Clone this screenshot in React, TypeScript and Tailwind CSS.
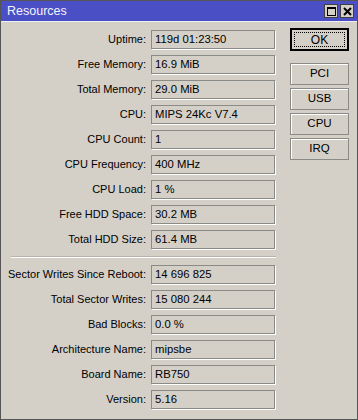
import React from 'react';

const top = [
  ['Uptime', '119d 01:23:50'],
  ['Free Memory', '16.9 MiB'],
  ['Total Memory', '29.0 MiB'],
  ['CPU', 'MIPS 24Kc V7.4'],
  ['CPU Count', '1'],
  ['CPU Frequency', '400 MHz'],
  ['CPU Load', '1 %'],
  ['Free HDD Space', '30.2 MB'],
  ['Total HDD Size', '61.4 MB'],
];

const bottom = [
  ['Sector Writes Since Reboot', '14 696 825'],
  ['Total Sector Writes', '15 080 244'],
  ['Bad Blocks', '0.0 %'],
  ['Architecture Name', 'mipsbe'],
  ['Board Name', 'RB750'],
  ['Version', '5.16'],
];

function Row({ label, value }: { label: string; value: string }) {
  return (
    <div className="flex items-center h-[25px]">
      <span className="w-[150px] text-right pr-[5px] text-[11px] text-black whitespace-nowrap">{label}:</span>
      <div className="w-[124px] h-[19px] border border-[#8a8a86] shadow-[1px_1px_0_#ffffff] flex items-center pl-[3px] text-[11.3px] text-black whitespace-nowrap">
        {value}
      </div>
    </div>
  );
}

function Btn({ label, focus }: { label: string; focus?: boolean }) {
  if (focus) {
    return (
      <div className="w-[59px] h-[23px] border-2 border-black p-[2px]">
        <div className="w-full h-full border border-dotted border-black flex items-center justify-center text-[12px]">{label}</div>
      </div>
    );
  }
  return (
    <div className="w-[59px] h-[22px] border border-[#8a8a86] shadow-[inset_1px_1px_0_#ffffff] flex items-center justify-center text-[11.5px]">
      {label}
    </div>
  );
}

export default function App() {
  return (
    <div className="w-[358px] h-[420px] bg-[#d4d0c8] border border-[#555555] flex flex-col" style={{ fontFamily: '"Liberation Sans", Arial, sans-serif' }}>
      {/* Title bar */}
      <div className="h-[21px] bg-[#4a4fc6] flex items-center justify-between pl-[6px] pr-[3px] border-b border-[#f0f0f0]">
        <span className="text-[#f4f4ff] text-[12.5px]">Resources</span>
        <div className="flex gap-[2px]">
          <div className="w-[14px] h-[14px] bg-[#d4d0c8] border border-[#404040] flex items-center justify-center">
            <div className="w-[9px] h-[9px] border border-black border-t-2" />
          </div>
          <div className="w-[14px] h-[14px] bg-[#d4d0c8] border border-[#404040] flex items-center justify-center">
            <svg width="9" height="9" viewBox="0 0 9 9">
              <path d="M1 1 L8 8 M8 1 L1 8" stroke="black" strokeWidth="2" />
            </svg>
          </div>
        </div>
      </div>

      <div className="flex pt-[5px]">
        <div className="flex flex-col">
          {top.map(([l, v]) => <Row key={l} label={l} value={v} />)}
          <div className="ml-[10px] w-[265px] my-[4px] border-t border-[#b8b4ac] border-b border-b-white" />
          {bottom.map(([l, v]) => <Row key={l} label={l} value={v} />)}
        </div>
        <div className="flex flex-col ml-[14px] pt-[1px] gap-[3px]">
          <div className="mb-[9px]"><Btn label="OK" focus /></div>
          <Btn label="PCI" />
          <Btn label="USB" />
          <Btn label="CPU" />
          <Btn label="IRQ" />
        </div>
      </div>
    </div>
  );
}
